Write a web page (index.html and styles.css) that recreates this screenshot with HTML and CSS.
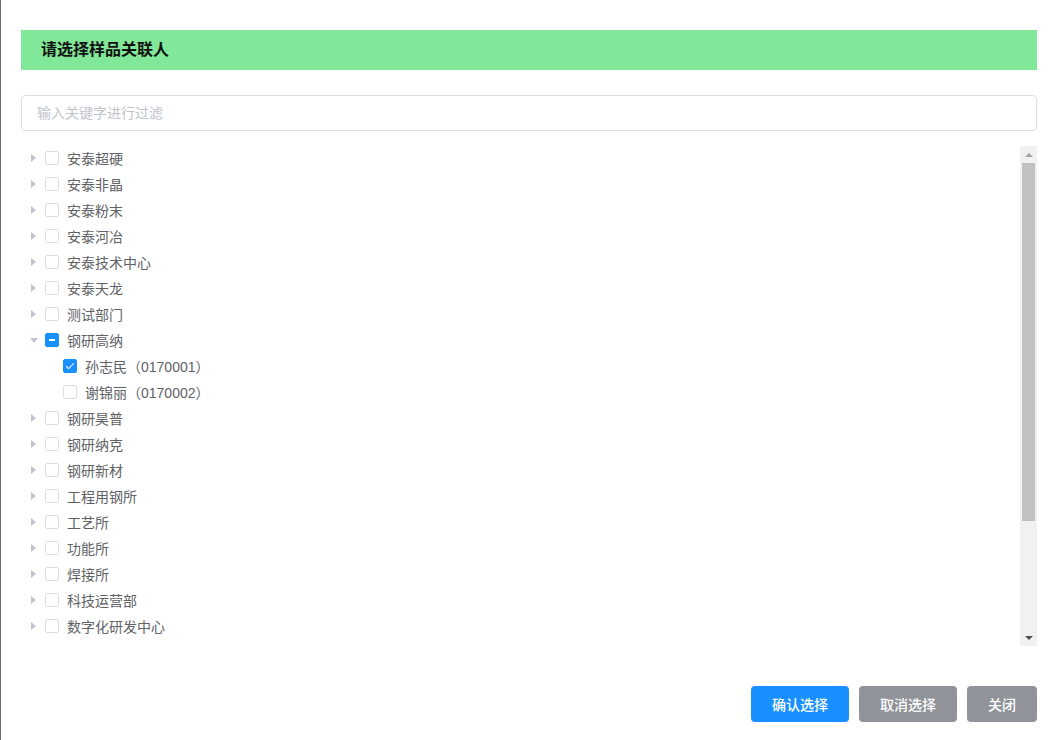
FILE: index.html
```html
<!DOCTYPE html>
<html lang="zh-CN">
<head>
    <meta charset="UTF-8">
    <meta name="viewport" content="width=device-width, initial-scale=1.0">
    <title>请选择样品关联人</title>
    <link rel="stylesheet" href="styles.css">
</head>
<body>
    <div class="dialog">
        <div class="dialog-header">请选择样品关联人</div>

        <input type="text" class="filter-input" placeholder="输入关键字进行过滤">

        <div class="tree-wrap">
            <div class="tree">
                <div class="node"><span class="arrow"></span><span class="check"></span><span class="label">安泰超硬</span></div>
                <div class="node"><span class="arrow"></span><span class="check"></span><span class="label">安泰非晶</span></div>
                <div class="node"><span class="arrow"></span><span class="check"></span><span class="label">安泰粉末</span></div>
                <div class="node"><span class="arrow"></span><span class="check"></span><span class="label">安泰河冶</span></div>
                <div class="node"><span class="arrow"></span><span class="check"></span><span class="label">安泰技术中心</span></div>
                <div class="node"><span class="arrow"></span><span class="check"></span><span class="label">安泰天龙</span></div>
                <div class="node"><span class="arrow"></span><span class="check"></span><span class="label">测试部门</span></div>
                <div class="node"><span class="arrow open"></span><span class="check half"></span><span class="label">钢研高纳</span></div>
                <div class="node child"><span class="arrow leaf"></span><span class="check checked"></span><span class="label">孙志民（0170001）</span></div>
                <div class="node child"><span class="arrow leaf"></span><span class="check"></span><span class="label">谢锦丽（0170002）</span></div>
                <div class="node"><span class="arrow"></span><span class="check"></span><span class="label">钢研昊普</span></div>
                <div class="node"><span class="arrow"></span><span class="check"></span><span class="label">钢研纳克</span></div>
                <div class="node"><span class="arrow"></span><span class="check"></span><span class="label">钢研新材</span></div>
                <div class="node"><span class="arrow"></span><span class="check"></span><span class="label">工程用钢所</span></div>
                <div class="node"><span class="arrow"></span><span class="check"></span><span class="label">工艺所</span></div>
                <div class="node"><span class="arrow"></span><span class="check"></span><span class="label">功能所</span></div>
                <div class="node"><span class="arrow"></span><span class="check"></span><span class="label">焊接所</span></div>
                <div class="node"><span class="arrow"></span><span class="check"></span><span class="label">科技运营部</span></div>
                <div class="node"><span class="arrow"></span><span class="check"></span><span class="label">数字化研发中心</span></div>
            </div>

            <!-- scrollbar drawn by hand, the headless browser hides real ones -->
            <div class="scrollbar">
                <span class="scroll-btn up"></span>
                <div class="scroll-track">
                    <div class="scroll-thumb"></div>
                </div>
                <span class="scroll-btn down"></span>
            </div>
        </div>

        <div class="dialog-footer">
            <button class="btn btn-primary">确认选择</button>
            <button class="btn btn-gray">取消选择</button>
            <button class="btn btn-gray btn-small">关闭</button>
        </div>
    </div>
</body>
</html>
```

FILE: styles.css
```css
body {
    margin: 0;
    padding: 0;
    background-color: #fff;
    border-left: 1px solid #6e6e6e;
    font-family: "Liberation Sans", "Noto Sans CJK SC", sans-serif;
    height: 740px;
    box-sizing: border-box;
    overflow: hidden;
}

.dialog {
    padding: 30px 18px 0 20px;
}

.dialog-header {
    background-color: #80e898;
    height: 40px;
    line-height: 40px;
    padding-left: 20px;
    font-size: 16px;
    font-weight: bold;
    color: #111;
}

.filter-input {
    display: block;
    width: 100%;
    box-sizing: border-box;
    height: 36px;
    margin-top: 25px;
    padding: 0 15px;
    border: 1px solid #dcdfe6;
    border-radius: 4px;
    font-family: inherit;
    font-size: 14px;
    color: #606266;
    outline: none;
}

.filter-input::placeholder {
    color: #c0c4cc;
}

.tree-wrap {
    display: flex;
    height: 500px;
    margin-top: 15px;
}

.tree {
    flex: 1;
    padding-top: 0;
    overflow: hidden;
}

.node {
    display: flex;
    align-items: center;
    height: 26px;
    margin-top: -1px;
    margin-bottom: 1px;
    padding-left: 10px;
    font-size: 14px;
    color: #606266;
}

.node.child {
    padding-left: 28px;
}

.arrow {
    width: 0;
    height: 0;
    border-top: 4px solid transparent;
    border-bottom: 4px solid transparent;
    border-left: 5px solid #c0c4cc;
    margin-right: 9px;
}

.arrow.open {
    border-left: 4px solid transparent;
    border-right: 4px solid transparent;
    border-top: 5px solid #c0c4cc;
    border-bottom: 0;
    margin-left: -1px;
    margin-right: 7px;
}

.arrow.leaf {
    border-left-color: transparent;
}

.check {
    position: relative;
    width: 14px;
    height: 14px;
    box-sizing: border-box;
    border: 1px solid #dcdfe6;
    border-radius: 2px;
    background-color: #fff;
    margin-right: 8px;
}

.check.checked,
.check.half {
    background-color: #1890ff;
    border-color: #1890ff;
}

.check.checked::after {
    content: "";
    position: absolute;
    left: 4px;
    top: 1px;
    width: 3px;
    height: 7px;
    border: 1px solid #fff;
    border-left: 0;
    border-top: 0;
    transform: rotate(45deg);
}

.check.half::before {
    content: "";
    position: absolute;
    left: 3px;
    right: 3px;
    top: 5px;
    height: 2px;
    background-color: #fff;
}

.scrollbar {
    display: flex;
    flex-direction: column;
    width: 17px;
    background-color: #f1f1f1;
}

.scroll-btn {
    display: flex;
    justify-content: center;
    align-items: center;
    height: 17px;
}

.scroll-btn::before {
    content: "";
    width: 0;
    height: 0;
    border-left: 4px solid transparent;
    border-right: 4px solid transparent;
}

.scroll-btn.up::before {
    border-bottom: 4px solid #a3a3a3;
}

.scroll-btn.down::before {
    border-top: 4px solid #505050;
}

.scroll-track {
    flex: 1;
    padding: 0 2px;
}

.scroll-thumb {
    height: 358px;
    background-color: #c1c1c1;
}

.dialog-footer {
    display: flex;
    justify-content: flex-end;
    gap: 10px;
    margin-top: 40px;
}

.btn {
    width: 98px;
    height: 36px;
    border: none;
    border-radius: 4px;
    font-family: inherit;
    font-size: 14px;
    font-weight: 500;
    color: #fff;
    cursor: pointer;
}

.btn-primary {
    background-color: #1890ff;
}

.btn-gray {
    background-color: #909399;
}

.btn-small {
    width: 70px;
}
```
